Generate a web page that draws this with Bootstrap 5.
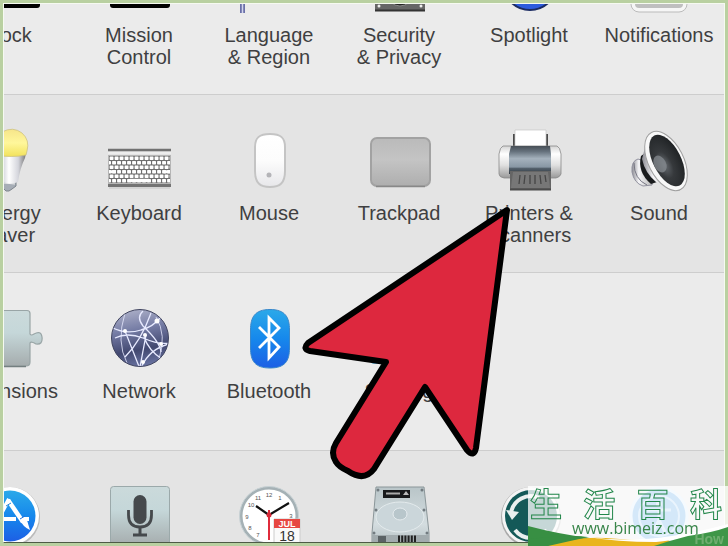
<!DOCTYPE html>
<html lang="en">
<head>
<meta charset="utf-8">
<meta name="viewport" content="width=device-width, initial-scale=1">
<title>System Preferences</title>
<link rel="stylesheet" href="https://cdn.jsdelivr.net/npm/bootstrap@5.3.0/dist/css/bootstrap.min.css">
<style>
body { font-family: "Liberation Sans", Arial, sans-serif; color: #3f3f41; background: #b8d0a0; }
.frame { height: 100vh; border: 3px solid #b9d0a1; }
.pane { border: 1px solid #f6faf1; border-bottom-color: #4d5a45; background: #ebebeb; }
.sections { margin: -87px 0 0 -60px; }
.pref-row { display: grid; grid-template-columns: repeat(6, 1fr); min-height: 178px; padding-top: 34px; border-bottom: 1px solid #cdcdcd; background: #ebebeb; }
.pref-row:nth-child(even) { background: #e4e4e4; }
.pref { font-size: 20px; line-height: 22px; color: inherit; gap: 9px; }
.pref svg { width: 64px; height: 64px; overflow: visible; }
.pointer { left: 302px; top: 206px; width: 210px; height: 276px; }
.stamp { width: 200px; height: 60px; background: rgba(255,255,255,.76); }
.stamp-title { font: bold 32px/33px "Noto Sans CJK SC", sans-serif; color: transparent; -webkit-text-stroke: 1px #23874b; padding: 0 6px 0 2px; }
.stamp-link { font: 16px/20px "Open Sans", sans-serif; color: #388549; top: 32px; left: 44px; }
.stamp-mark { font: bold 14px/14px "Liberation Sans", sans-serif; color: #6fae70; right: 4px; bottom: 0; }
</style>
<script src="https://cdn.jsdelivr.net/npm/bootstrap@5.3.0/dist/js/bootstrap.bundle.min.js"></script>
</head>
<body>
<main class="frame position-relative overflow-hidden">
<div class="pane h-100 overflow-hidden">
<div class="sections">

<section class="pref-row">
  <button class="pref btn border-0 p-0 d-flex flex-column align-items-center">
    <svg viewBox="0 0 64 64" aria-hidden="true"><rect x="3" y="10" width="60" height="47" rx="3"/></svg><span>Dock</span></button>
  <button class="pref btn border-0 p-0 d-flex flex-column align-items-center">
    <svg viewBox="0 0 64 64" aria-hidden="true"><rect x="3" y="10" width="60" height="47" rx="3"/></svg><span>Mission<br>Control</span></button>
  <button class="pref btn border-0 p-0 d-flex flex-column align-items-center">
    <svg viewBox="0 0 64 64" aria-hidden="true"><rect x="3" y="4" width="5" height="58" fill="#6a70a8"/><path d="M5.500 4v58" stroke="#d4d6ee" stroke-width="1.500"/></svg><span>Language<br>&amp; Region</span></button>
  <button class="pref btn border-0 p-0 d-flex flex-column align-items-center">
    <svg viewBox="0 0 64 64" aria-hidden="true"><rect x="8" y="6" width="50" height="54" fill="#666"/><path d="M8 59.500h50" stroke="#333" stroke-width="2"/><circle cx="33" cy="42" r="13" fill="#252525" stroke="#888"/><circle cx="12" cy="55" r="1.500" fill="#eee"/><circle cx="54" cy="55" r="1.500" fill="#eee"/></svg><span>Security<br>&amp; Privacy</span></button>
  <button class="pref btn border-0 p-0 d-flex flex-column align-items-center">
    <svg viewBox="0 0 64 64" aria-hidden="true"><circle cx="33" cy="32" r="27" fill="#2c5bdd" stroke="#1b2b62" stroke-width="2"/></svg><span>Spotlight</span></button>
  <button class="pref btn border-0 p-0 d-flex flex-column align-items-center">
    <svg viewBox="0 0 64 64" aria-hidden="true"><rect x="4" y="5" width="56" height="56" rx="8" fill="#f6f6f6" stroke="#bbb"/><rect x="8" y="9" width="48" height="48" rx="4" fill="#bfbfbf"/></svg><span>Notifications</span></button>
</section>

<section class="pref-row">
  <button class="pref btn border-0 p-0 d-flex flex-column align-items-center">
    <svg viewBox="0 0 64 64" aria-hidden="true">
      <defs><linearGradient id="bulb" x1="0" x2="0" y1="0" y2="1"><stop stop-color="#f6e58a"/><stop offset=".5" stop-color="#fff79b"/><stop offset="1" stop-color="#f2e25c"/></linearGradient>
      <linearGradient id="neck"><stop stop-color="#999fae"/><stop offset=".45" stop-color="#fff"/><stop offset=".75" stop-color="#d4d5dc"/><stop offset="1" stop-color="#777"/></linearGradient></defs>
      <path d="M26 50h13v7l-4 3-3 2h-3l-3-3z" fill="#a6adb6" stroke="#7d848c"/><path d="M27 54l11 1" stroke="#eee"/>
      <path d="M18 24h31l-1 5q-5 10-7 24-8 3-15 0-1-12-8-27z" fill="url(#neck)"/>
      <path d="M18 25q-3-15 7-22 11-6 20 1 8 7 5 18l-1 4q-14 3-31 0z" fill="url(#bulb)" stroke="#c9bd7b" stroke-width=".7"/>
    </svg><span>Energy<br>Saver</span></button>
  <button class="pref btn border-0 p-0 d-flex flex-column align-items-center">
    <svg viewBox="0 0 64 64" aria-hidden="true">
      <defs><pattern id="keys" width="5" height="9" patternUnits="userSpaceOnUse" x="2" y="27"><rect width="5" height="9" fill="#6f6f6f"/><rect x=".6" y=".5" width="3.900" height="3.400" rx=".6" fill="#fff"/><rect x="-1.900" y="5" width="3.900" height="3.400" rx=".6" fill="#fff"/><rect x="3.100" y="5" width="3.900" height="3.400" rx=".6" fill="#fff"/></pattern></defs>
      <path d="M1 21h63" stroke="#727272" stroke-width="2.500"/><path d="M1 24h63" stroke="#f6f6f6"/>
      <rect x="1" y="26" width="63" height="31" fill="#b5b5b5"/><rect x="2" y="27" width="61" height="27" fill="url(#keys)"/>
      <path d="M23 51.500h19" stroke="#fff" stroke-width="3.400"/><path d="M3 42.700h6M57 42.700h6" stroke="#fff" stroke-width="3"/>
      <path d="M1 56.500h63" stroke="#747474" stroke-width="3"/><path d="M2 59h61" stroke="#c5c5c5"/>
    </svg><span>Keyboard</span></button>
  <button class="pref btn border-0 p-0 d-flex flex-column align-items-center">
    <svg viewBox="0 0 64 64" aria-hidden="true">
      <defs><linearGradient id="mouse" x1="0" x2="0" y1="0" y2="1"><stop stop-color="#fff"/><stop offset=".5" stop-color="#fcfcfc"/><stop offset="1" stop-color="#e7e7ea"/></linearGradient></defs>
      <path d="M33 5C44 5 48 9 48 18v24c0 12-5 16-15 16S18 54 18 42V18C18 9 22 5 33 5z" fill="url(#mouse)" stroke="#c4c4c4" stroke-width="2"/><circle cx="32" cy="46" r="2.500" fill="#b4b4b8"/>
    </svg><span>Mouse</span></button>
  <button class="pref btn border-0 p-0 d-flex flex-column align-items-center">
    <svg viewBox="0 0 64 64" aria-hidden="true">
      <defs><linearGradient id="pad" x1="0" x2="0" y1="0" y2="1"><stop stop-color="#bababa"/><stop offset=".45" stop-color="#c4c4c4"/><stop offset="1" stop-color="#aeaeae"/></linearGradient></defs>
      <rect x="4" y="9" width="59" height="48" rx="6" fill="url(#pad)" stroke="#a2a2a2" stroke-width="2"/><path d="M9 57.500h49" stroke="#888" stroke-width="1.500"/>
    </svg><span>Trackpad</span></button>
  <button class="pref btn border-0 p-0 d-flex flex-column align-items-center">
    <svg viewBox="0 0 64 64" aria-hidden="true">
      <defs><linearGradient id="roll" x1="0" x2="0" y1="0" y2="1"><stop stop-color="#474e56"/><stop offset=".2" stop-color="#66727d"/><stop offset=".45" stop-color="#a5b2bd"/><stop offset=".75" stop-color="#8897a4"/><stop offset=".8" stop-color="#53606b"/><stop offset="1" stop-color="#303840"/></linearGradient>
      <linearGradient id="side" x1="0" x2="0" y1="0" y2="1"><stop stop-color="#d4d4d4"/><stop offset=".25" stop-color="#fff"/><stop offset=".6" stop-color="#e0e0e0"/><stop offset="1" stop-color="#999"/></linearGradient></defs>
      <path d="M16 5h35v15H16z" fill="#4a4a4a"/><path d="M18 1h31v17H18z" fill="#fff" stroke="#c5c5c5" stroke-width=".7"/>
      <path d="M6 17h54q3 1 4 8v20q-1 3-5 4H7q-5-1-5-4V25q1-7 4-8z" fill="url(#side)" stroke="#888" stroke-width=".8"/>
      <path d="M14 17h39l1 8v20H12V25z" fill="url(#roll)"/>
      <path d="M13 42h41v19H13z" fill="#656565"/><path d="M16 43h35l2 16H14z" fill="#777"/>
      <path d="M23 46l-1 9M28 46l-1 9M33 46v9M38 46v9M43 46l1 9M48 46l1 7" stroke="#464646" stroke-width="1.300"/><path d="M13 60.500h41" stroke="#4b4b4b" stroke-width="2"/>
    </svg><span>Printers &amp;<br>Scanners</span></button>
  <button class="pref btn border-0 p-0 d-flex flex-column align-items-center">
    <svg viewBox="0 0 64 64" aria-hidden="true">
      <defs><linearGradient id="horn"><stop stop-color="#8c8c93"/><stop offset=".3" stop-color="#f5f5f7"/><stop offset="1" stop-color="#aaa"/></linearGradient><radialGradient id="cone" cx=".35" cy=".55" r=".65"><stop stop-color="#666b70"/><stop offset=".4" stop-color="#36393c"/><stop offset="1" stop-color="#202325"/></radialGradient></defs>
      <path d="M11 30q-7 2-6 13 2 11 11 14l9-1 3-20z" fill="url(#horn)" stroke="#9393a0"/><path d="M7 34q0 16 13 22" fill="none" stroke="#777783"/>
      <path d="M14 27q-4 16 10 28l6-2-9-31z" fill="#191b1d"/>
      <path d="M21 7l-6 23q3 14 14 23l24 9z" fill="url(#horn)"/>
      <ellipse cx="39" cy="32" rx="17.500" ry="32" transform="rotate(-27 39 32)" fill="#f8f8f8" stroke="#a0a0a0"/>
      <ellipse cx="40" cy="31.500" rx="14" ry="28" transform="rotate(-27 40 31.500)" fill="url(#cone)"/>
      <ellipse cx="33" cy="35" rx="6" ry="9" transform="rotate(-27 33 35)" fill="#858b90" opacity=".75"/>
    </svg><span>Sound</span></button>
</section>

<section class="pref-row">
  <button class="pref btn border-0 p-0 d-flex flex-column align-items-center">
    <svg viewBox="0 0 64 64" aria-hidden="true">
      <defs><linearGradient id="tile" x1="0" x2="0" y1="0" y2="1"><stop stop-color="#cbdadb"/><stop offset=".4" stop-color="#c5d7d9"/><stop offset="1" stop-color="#a5acad"/></linearGradient></defs>
      <path d="M0 3.500h50q3 0 3 3V27q1 2 4 0 7-4 8 3 1 8-6 7-5-3-6-1v19q0 4-4 4H0z" fill="url(#tile)" stroke="#99a5a6" stroke-width="1.200"/><path d="M0 59.500h49" stroke="#747f80" stroke-width="1.500"/>
    </svg><span>Extensions</span></button>
  <button class="pref btn border-0 p-0 d-flex flex-column align-items-center">
    <svg viewBox="0 0 64 64" aria-hidden="true">
      <defs><linearGradient id="globe" x1=".4" x2=".6" y1="0" y2="1"><stop stop-color="#a9adc6"/><stop offset=".35" stop-color="#747ba4"/><stop offset=".7" stop-color="#424870"/><stop offset="1" stop-color="#6b75a4"/></linearGradient><clipPath id="globeclip"><circle cx="33" cy="31" r="28"/></clipPath></defs>
      <circle cx="33" cy="31" r="28.500" fill="url(#globe)" stroke="#414560"/>
      <g clip-path="url(#globeclip)" fill="none" stroke="#e7eaff" stroke-width="1.300"><path d="M4 20q14 8 30 3 12-3 20-13M8 31q12-6 28 0 16 7 27 5M36 4q-7 6 0 15 17 16 18 26M44 6Q34 34 18 50M18 24l15 38M39 28L33 60M62 37q-20 5-28 24M37 30q5 14 18 22"/><path d="M18 6Q9 35 20 56M49 10q11 18 3 42" stroke-width=".8"/></g>
      <g fill="#fff"><circle cx="18" cy="24" r="2"/><circle cx="50" cy="14" r="2.500"/><circle cx="38" cy="28" r="2"/><circle cx="54" cy="37" r="2"/><circle cx="36" cy="55" r="2"/></g>
    </svg><span>Network</span></button>
  <button class="pref btn border-0 p-0 d-flex flex-column align-items-center">
    <svg viewBox="0 0 64 64" aria-hidden="true">
      <defs><linearGradient id="blue" x1="0" x2="0" y1="0" y2="1"><stop stop-color="#2ba9e9"/><stop offset=".5" stop-color="#1688ec"/><stop offset="1" stop-color="#1d5fe5"/></linearGradient></defs>
      <path d="M33 2.500C48 2.500 52.500 10 52.500 23v18C52.500 54 48 61 33 61S13.500 54 13.500 41V23C13.500 10 18 2.500 33 2.500z" fill="url(#blue)" stroke="#3b88ca"/>
      <path d="M22 20l20 20-10 11V11l10 10-20 20" fill="none" stroke="#fff" stroke-width="2.800"/>
    </svg><span>Bluetooth</span></button>
  <button class="pref btn border-0 p-0 d-flex flex-column align-items-center">
    <svg viewBox="0 0 64 64" aria-hidden="true"><path d="M4 12q0-3 3-3h16l4 5h31q3 0 3 3v37q0 3-3 3H7q-3 0-3-3z" fill="#77bde0"/></svg><span>Sharing</span></button>
</section>

<section class="pref-row">
  <button class="pref btn border-0 p-0 d-flex flex-column align-items-center" aria-label="App Store">
    <svg viewBox="0 0 64 64" aria-hidden="true">
      <circle cx="33" cy="32" r="30" fill="#bbb"/><circle cx="33" cy="31" r="29" fill="#fff"/><circle cx="33" cy="31" r="25.500" fill="url(#blue)"/>
      <path d="M31 15l15 22" stroke="#fff" stroke-width="4.500"/><path d="M32 14L18 40M12 34h27M46 34h6" stroke="#fff" stroke-width="4"/><path d="M43 35l6-3 4 13q-7-3-10-10z" fill="#fff"/><path d="M29 21l5-3" stroke="#2588d8"/><path d="M43 34l5-3" stroke="#2374dc"/>
    </svg></button>
  <button class="pref btn border-0 p-0 d-flex flex-column align-items-center" aria-label="Dictation">
    <svg viewBox="0 0 64 64" aria-hidden="true"><rect x="3.500" y="1.500" width="59" height="59" rx="3" fill="url(#tile)" stroke="#9ba9aa"/><rect x="26.500" y="10" width="13" height="29" rx="6.500" fill="#45494c"/><path d="M21.500 25v5q0 12 11.500 12t11.500-12v-5" fill="none" stroke="#45494c" stroke-width="2.800"/><path d="M33 42v8M26 50h14" stroke="#45494c" stroke-width="3"/></svg></button>
  <button class="pref btn border-0 p-0 d-flex flex-column align-items-center" aria-label="Date and Time">
    <svg viewBox="0 0 64 64" aria-hidden="true">
      <circle cx="32" cy="31" r="28" fill="#fff" stroke="#a5b1b5" stroke-width="3"/><circle cx="32" cy="31" r="29.500" fill="none" stroke="#c8d2d5"/>
      <g font-size="6" fill="#555" text-anchor="middle" font-family="Liberation Sans"><text x="32" y="12">12</text><text x="43" y="15">1</text><text x="54" y="33">3</text><text x="21" y="15">11</text><text x="14" y="22">10</text><text x="10" y="34">9</text><text x="13" y="45">8</text><text x="21" y="52">7</text></g>
      <path d="M32 30L19 21M32 30l20-12" stroke="#111" stroke-width="2.200"/><path d="M32 25v30" stroke="#e02b3b" stroke-width="2"/><circle cx="32" cy="30" r="2.500" fill="#d72a39"/>
      <path d="M37 34h26v32H37z" fill="#fafafa" stroke="#ccc"/><path d="M37 34h26v9H37z" fill="#e74742"/><text x="50" y="42" text-anchor="middle" font-size="9" font-weight="bold" fill="#fff" font-family="Liberation Sans">JUL</text><text x="50" y="56" text-anchor="middle" font-size="14" fill="#333" font-family="Liberation Sans">18</text>
    </svg></button>
  <button class="pref btn border-0 p-0 d-flex flex-column align-items-center" aria-label="Startup Disk">
    <svg viewBox="0 0 64 64" aria-hidden="true">
      <defs><linearGradient id="disk" x1="0" x2="0" y1="0" y2="1"><stop stop-color="#b9c5c8"/><stop offset=".6" stop-color="#d4dde0"/><stop offset="1" stop-color="#afbabd"/></linearGradient></defs>
      <path d="M9 2h48l5 46v16H5V48z" fill="url(#disk)" stroke="#8b9699"/><path d="M5 50h57v12H5z" fill="#a2abae"/><ellipse cx="33" cy="32" rx="24" ry="15" fill="#cbd6da" stroke="#e4ebed"/><ellipse cx="33" cy="29" rx="7" ry="6" fill="#b8c6cb" stroke="#e5ebee"/>
      <path d="M16 5h27v8H16z" fill="#17191b"/><path d="M19 8.500h14" stroke="#aaa" stroke-width="2"/><path d="M36 10l3-4 3 4z" fill="#bbb"/>
      <g fill="#727b80"><circle cx="11" cy="5" r="1.500"/><circle cx="55" cy="5" r="1.500"/><circle cx="9" cy="25" r="1.500"/><circle cx="57" cy="25" r="1.500"/><circle cx="7" cy="48" r="1.500"/><circle cx="60" cy="48" r="1.500"/></g>
      <path d="M31 54h18" stroke="#222" stroke-width="7" stroke-dasharray="2 1.200"/><path d="M11 51h8v6h-8z" fill="#5b6265"/>
    </svg></button>
  <button class="pref btn border-0 p-0 d-flex flex-column align-items-center" aria-label="Time Machine">
    <svg viewBox="0 0 64 64" aria-hidden="true"><circle cx="34" cy="32" r="30" fill="#aaa"/><circle cx="34" cy="31" r="29" fill="#f4f4f4"/><circle cx="34" cy="31" r="26" fill="#145958"/><path d="M18 45a20 20 0 0 0 32 0M14 28a20 20 0 0 1 28-15" fill="none" stroke="#e9efee" stroke-width="4"/><path d="M9 25l13 2-7 8z" fill="#e9efee"/></svg></button>
  <button class="pref btn border-0 p-0 d-flex flex-column align-items-center" aria-label="Accessibility">
    <svg viewBox="0 0 64 64" aria-hidden="true"><circle cx="32" cy="31" r="28" fill="#4d9fe6" stroke="#d5e9fb" stroke-width="3"/><circle cx="32" cy="31" r="20" fill="none" stroke="#a9d2f6" stroke-width="2"/><circle cx="32" cy="19" r="3" fill="#a9d2f6"/><path d="M20 25h24M32 25v10l-6 12M32 35l6 12" fill="none" stroke="#a9d2f6" stroke-width="3"/></svg></button>
</section>
</div>
</div>
</main>

<svg class="pointer position-absolute pe-none" viewBox="302 206 210 276" aria-hidden="true">
  <path d="M507 210L308 343Q302 349 310 351L386 362 336 443Q330 453 336 462 339 467 348 471 364 482 374 469L425 387 467 450Q474 458 476 448z" fill="#dd283e" stroke="#000" stroke-width="6" stroke-linejoin="round"/>
</svg>

<aside class="stamp position-fixed bottom-0 end-0 overflow-hidden">
  <svg class="position-absolute bottom-0 start-0 w-100" height="22" viewBox="0 0 200 22" preserveAspectRatio="none" aria-hidden="true">
    <path d="M0 2Q30 10 62 14L36 22H0z" fill="#388f43"/><path d="M18 22Q48 12 78 14 110 17 140 16L152 22z" fill="#e9b51e"/><path d="M0 15Q45 10 60 13L20 22H0z" fill="#388f43"/><path d="M60 13Q120 22 200 0V6Q155 15 128 18 88 18 60 13z" fill="#fff"/><path d="M126 22Q144 16 160 12 183 9 200 3V22z" fill="#3e9648"/>
  </svg>
  <div class="stamp-title position-relative d-flex justify-content-between"><span>生</span><span>活</span><span>百</span><span>科</span></div>
  <span class="stamp-mark position-absolute">How</span>
  <a class="stamp-link position-absolute text-decoration-none" href="#">www.bimeiz.com</a>
</aside>
</body>
</html>
